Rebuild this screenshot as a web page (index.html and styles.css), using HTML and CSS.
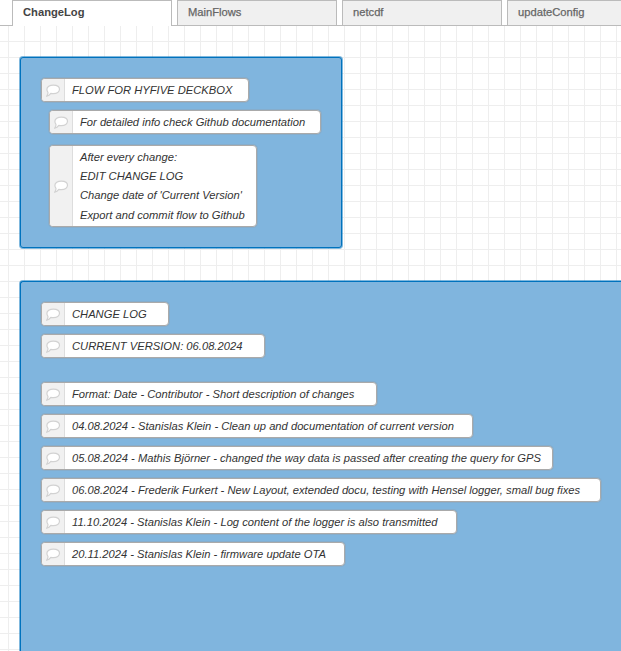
FILE: index.html
```
<!DOCTYPE html>
<html lang="en">
<head>
<meta charset="utf-8">
<title>ChangeLog</title>
<link rel="stylesheet" href="styles.css">
</head>
<body>
<svg class="defs" aria-hidden="true"><symbol id="comment" viewBox="0 0 16 16"><path d="M8.300 3.100c3.600 0 6.200 1.700 6.200 4.200s-2.600 4.300-6.200 4.300c-.9 0-1.700-.1-2.500-.3-.9 1.300-2.200 2.400-4.200 3 .9-1.200 1.600-2.400 1.400-3.900C2.200 9.600 1.900 8.500 1.900 7.300c0-2.500 2.800-4.200 6.400-4.200z"/></symbol></svg>
<nav class="tabs">
  <div class="tab active">ChangeLog</div>
  <div class="tab">MainFlows</div>
  <div class="tab">netcdf</div>
  <div class="tab last">updateConfig</div>
</nav>
<main class="canvas">
  <section class="group info">
    <div class="node w208"><span class="icon"><svg><use href="#comment"/></svg></span><p><span>FLOW FOR HYFIVE DECKBOX</span></p></div>
    <div class="node w272 indent"><span class="icon"><svg><use href="#comment"/></svg></span><p><span>For detailed info check Github documentation</span></p></div>
    <div class="node w208 indent tall"><span class="icon"><svg><use href="#comment"/></svg></span><p><span>After every change:</span><span>EDIT CHANGE LOG</span><span>Change date of 'Current Version'</span><span>Export and commit flow to Github</span></p></div>
  </section>
  <section class="group log">
    <div class="node w128"><span class="icon"><svg><use href="#comment"/></svg></span><p><span>CHANGE LOG</span></p></div>
    <div class="node w224"><span class="icon"><svg><use href="#comment"/></svg></span><p><span>CURRENT VERSION: 06.08.2024</span></p></div>
    <div class="node w336 gap"><span class="icon"><svg><use href="#comment"/></svg></span><p><span>Format: Date - Contributor - Short description of changes</span></p></div>
    <div class="node w432"><span class="icon"><svg><use href="#comment"/></svg></span><p><span>04.08.2024 - Stanislas Klein - Clean up and documentation of current version</span></p></div>
    <div class="node w512"><span class="icon"><svg><use href="#comment"/></svg></span><p><span>05.08.2024 - Mathis Björner - changed the way data is passed after creating the query for GPS</span></p></div>
    <div class="node w560"><span class="icon"><svg><use href="#comment"/></svg></span><p><span>06.08.2024 - Frederik Furkert - New Layout, extended docu, testing with Hensel logger, small bug fixes</span></p></div>
    <div class="node w416"><span class="icon"><svg><use href="#comment"/></svg></span><p><span>11.10.2024 - Stanislas Klein - Log content of the logger is also transmitted</span></p></div>
    <div class="node w304"><span class="icon"><svg><use href="#comment"/></svg></span><p><span>20.11.2024 - Stanislas Klein - firmware update OTA</span></p></div>
  </section>
</main>
</body>
</html>
```
FILE: styles.css
```
* { box-sizing: border-box; }
body {
  margin: 0;
  height: 651px;
  overflow: hidden;
  background: #fff;
  font-family: "Liberation Sans", Arial, sans-serif;
  font-size: 11.2px;
}
.defs { display: none; }
.tabs {
  display: flex;
  gap: 5px;
  height: 26px;
  padding-left: 12px;
  border-bottom: 1px solid #bbb;
}
.tab {
  flex: none;
  width: 160px;
  height: 25px;
  padding-left: 10px;
  border: 1px solid #bbb;
  border-bottom: 0;
  background: #f0f0f0;
  color: #666;
  line-height: 23px;
  -webkit-text-stroke: 0.25px #666;
}
.tab.active {
  height: 26px;
  background: #fff;
  color: #444;
  font-weight: bold;
  -webkit-text-stroke: 0;
}
.tab.last {
  flex: 1;
  width: auto;
  min-width: 0;
  border-right: 0;
}
.canvas {
  height: 625px;
  padding: 31px 0 0 20px;
  overflow: hidden;
  background-image:
    linear-gradient(#eee 1px, transparent 1px),
    linear-gradient(90deg, #eee 1px, transparent 1px);
  background-size: 16px 16px;
  background-position: 8px 15px;
}
.group {
  padding: 20px 0 0 20px;
  border: 1px solid #0072bd;
  border-radius: 3px;
  background: #80b5de;
  box-shadow: 0 0 0 1px rgba(0, 114, 189, 0.5);
}
.info { width: 322px; height: 191px; }
.log {
  height: 420px;
  margin-top: 33px;
  border-right: 0;
  border-top-right-radius: 0;
}
.node {
  display: flex;
  height: 24px;
  margin-bottom: 8px;
  overflow: hidden;
  border: 1px solid #aaa;
  border-radius: 4px;
  background: #fff;
  box-shadow: 0 0 0 1px rgba(153, 153, 153, 0.25);
  color: #333;
  font-style: italic;
}
.icon {
  display: flex;
  align-items: center;
  justify-content: center;
  flex: none;
  width: 23px;
  border-right: 1px solid #ddd;
  background: #f1f1f1;
}
.icon svg {
  width: 16px;
  height: 16px;
  fill: #fff;
  stroke: #d2d2d2;
  stroke-width: 1.2;
  stroke-linejoin: round;
}
.node p {
  margin: 0;
  padding-left: 7px;
  line-height: 22px;
  white-space: nowrap;
}
.node p span { display: block; }
.indent { margin-left: 8px; }
.tall { height: 82px; margin-top: 11px; }
.tall p { padding-top: 2px; line-height: 19.2px; }
.gap { margin-top: 24px; }
.w128 { width: 128px; }
.w208 { width: 208px; }
.w224 { width: 224px; }
.w272 { width: 272px; }
.w304 { width: 304px; }
.w336 { width: 336px; }
.w416 { width: 416px; }
.w432 { width: 432px; }
.w512 { width: 512px; }
.w560 { width: 560px; }
```
